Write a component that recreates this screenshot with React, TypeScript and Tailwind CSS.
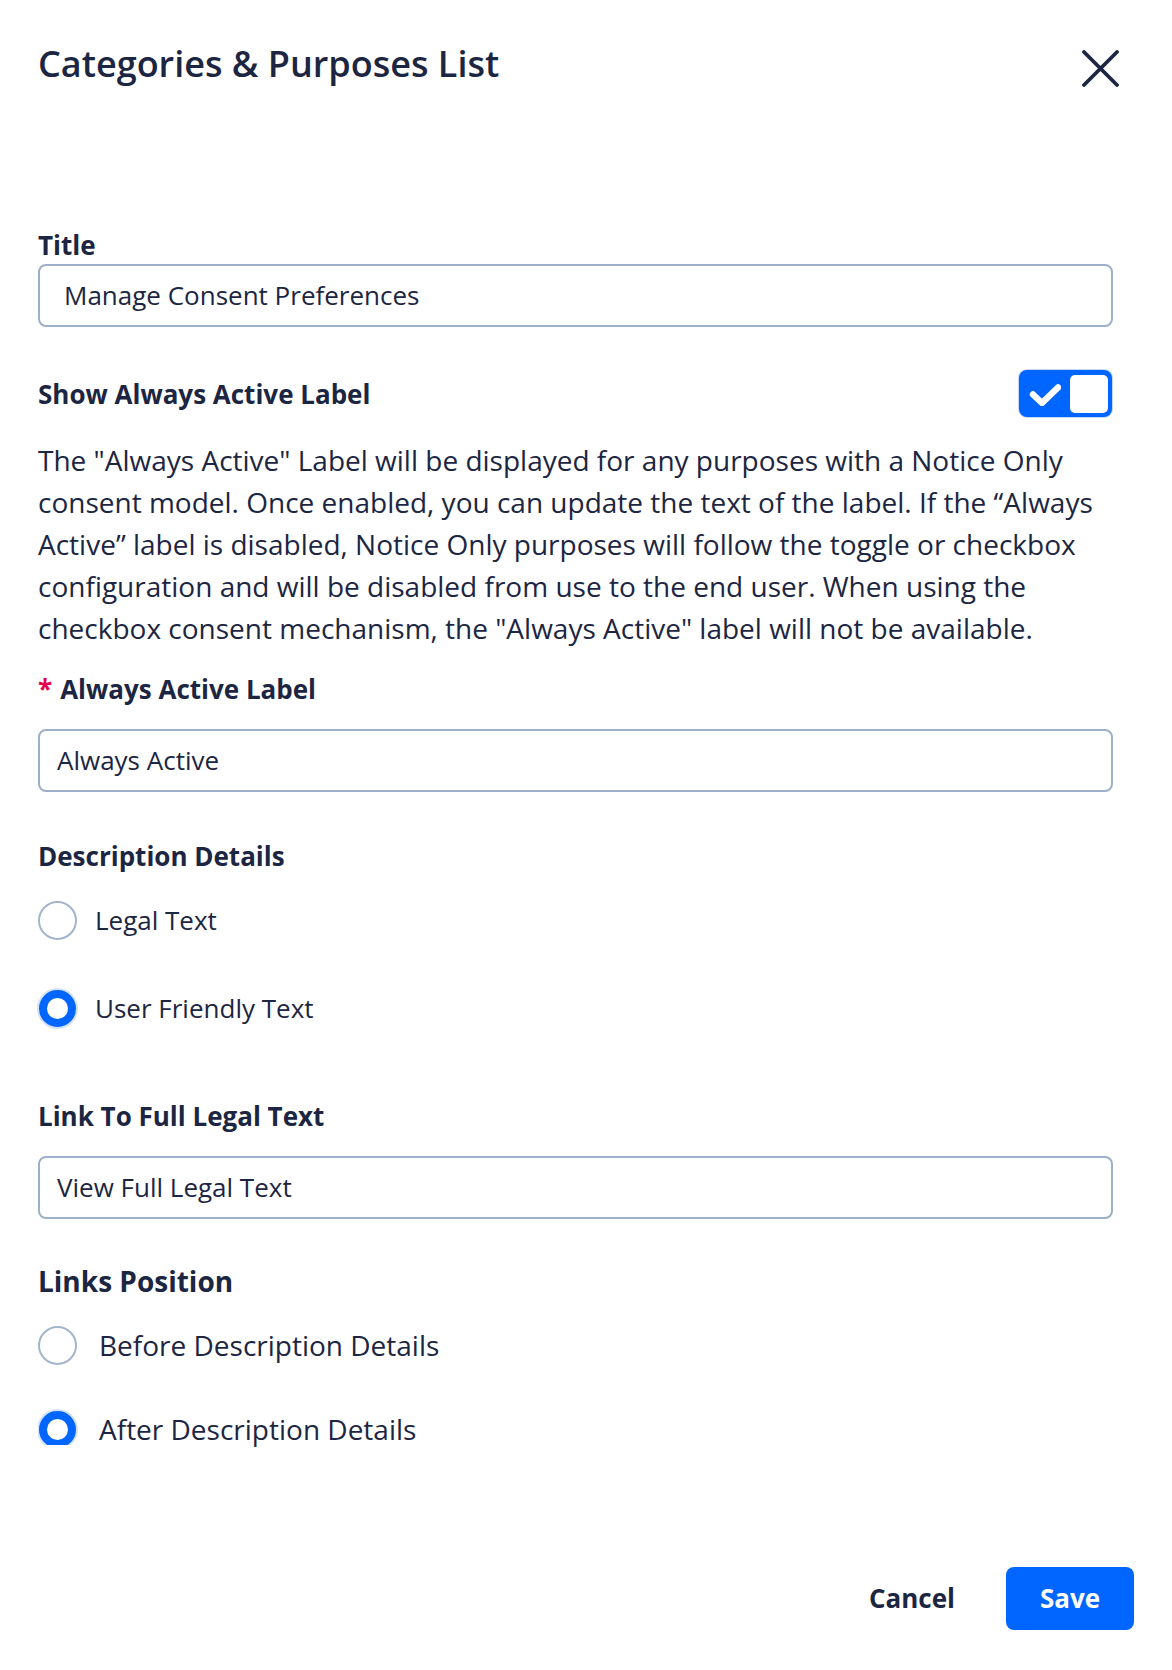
import React from 'react';

function Label({ children, className = '' }: { children: React.ReactNode; className?: string }) {
  return <div className={`text-[26px] font-bold leading-[34px] ${className}`}>{children}</div>;
}

function TextInput({ value, className = '', pad = 'pl-[17px]' }: { value: string; className?: string; pad?: string }) {
  return (
    <div
      className={`flex h-[63px] w-full items-center rounded-[8px] border-2 border-[#9db0ca] ${pad} text-[26px] ${className}`}
    >
      {value}
    </div>
  );
}

function Radio({
  checked,
  label,
  big = false,
  clipped = false,
  className = '',
}: {
  checked: boolean;
  label: string;
  big?: boolean;
  clipped?: boolean;
  className?: string;
}) {
  const circle = checked ? (
    <span className="flex h-[39px] w-[39px] shrink-0 items-center justify-center">
      <span className="h-[37px] w-[37px] rounded-full border-[8px] border-[#0066ff] bg-white ring-[2px] ring-[#d3e2f7]"></span>
    </span>
  ) : (
    <span className="h-[39px] w-[39px] shrink-0 rounded-full border-2 border-[#a3b5cd] bg-white"></span>
  );
  return (
    <div className={`flex h-[40px] items-center ${className}`}>
      {clipped ? <span className="h-[36px] w-[42px] shrink-0 self-start overflow-hidden pt-[0.5px]">{circle}</span> : circle}
      <span className={big ? (clipped ? 'ml-[19px] text-[28px]' : 'ml-[22px] text-[28px]') : 'ml-[18px] text-[26px]'}>
        {label}
      </span>
    </div>
  );
}

export default function App() {
  return (
    <div className="h-[1670px] w-[1172px] bg-white font-['Open_Sans',sans-serif] text-[#1c2642]">
      <div className="flex items-start justify-between pl-[38px] pr-[53px] pt-[42px]">
        <h1 className="text-[36px] font-semibold leading-[44px]">Categories &amp; Purposes List</h1>
        <svg width="37" height="37" viewBox="0 0 37 37" className="mt-[8px]">
          <path d="M2 2 L35 35 M35 2 L2 35" stroke="#1c2642" strokeWidth="3.8" strokeLinecap="round" />
        </svg>
      </div>

      <div className="ml-[38px] flex w-[1075px] flex-col">
        <Label className="mt-[141px]">Title</Label>
        <TextInput value="Manage Consent Preferences" pad="pl-[24px]" className="mt-[2px]" />

        <div className="mt-[43px] flex h-[47px] items-center justify-between">
          <Label>Show Always Active Label</Label>
          <div className="mr-[1px] flex h-[47px] w-[93px] items-center justify-between rounded-[8px] bg-[#0066ff] pl-[10px] pr-[4px] ring-1 ring-[#c3d6f2]">
            <svg width="32" height="24" viewBox="0 0 32 24">
              <path d="M4 12.5 L13 21 L29 5.5" fill="none" stroke="white" strokeWidth="6.5" strokeLinecap="round" strokeLinejoin="round" />
            </svg>
            <span className="h-[38px] w-[38px] rounded-[5px] bg-white"></span>
          </div>
        </div>

        <p className="mt-[22px] text-[28px] leading-[42px]">
          The "Always Active" Label will be displayed for any purposes with a Notice Only consent model. Once enabled, you can
          update the text of the label. If the “Always Active” label is disabled, Notice Only purposes will follow the toggle or
          checkbox configuration and will be disabled from use to the end user. When using the checkbox consent mechanism, the
          "Always Active" label will not be available.
        </p>

        <Label className="mt-[23px]">
          <span className="mr-[8px] text-[#e5004f]">*</span>Always Active Label
        </Label>
        <TextInput value="Always Active" className="mt-[23px]" />

        <Label className="mt-[47px]">Description Details</Label>
        <Radio checked={false} label="Legal Text" className="mt-[27px]" />
        <Radio checked label="User Friendly Text" className="mt-[48px]" />

        <Label className="mt-[71px]">Link To Full Legal Text</Label>
        <TextInput value="View Full Legal Text" className="mt-[23px]" />

        <div className="mt-[44px] text-[28px] font-bold leading-[36px]">Links Position</div>
        <Radio checked={false} big label="Before Description Details" className="mt-[26px]" />
        <Radio checked big clipped label="After Description Details" className="mt-[44px]" />
      </div>

      <div className="mt-[118px] flex items-center justify-end gap-[51px] pr-[38px]">
        <button className="text-[26px] font-bold text-[#1c2642]">Cancel</button>
        <button className="h-[63px] w-[128px] rounded-[8px] bg-[#0066ff] text-[26px] font-bold text-white">Save</button>
      </div>
    </div>
  );
}
